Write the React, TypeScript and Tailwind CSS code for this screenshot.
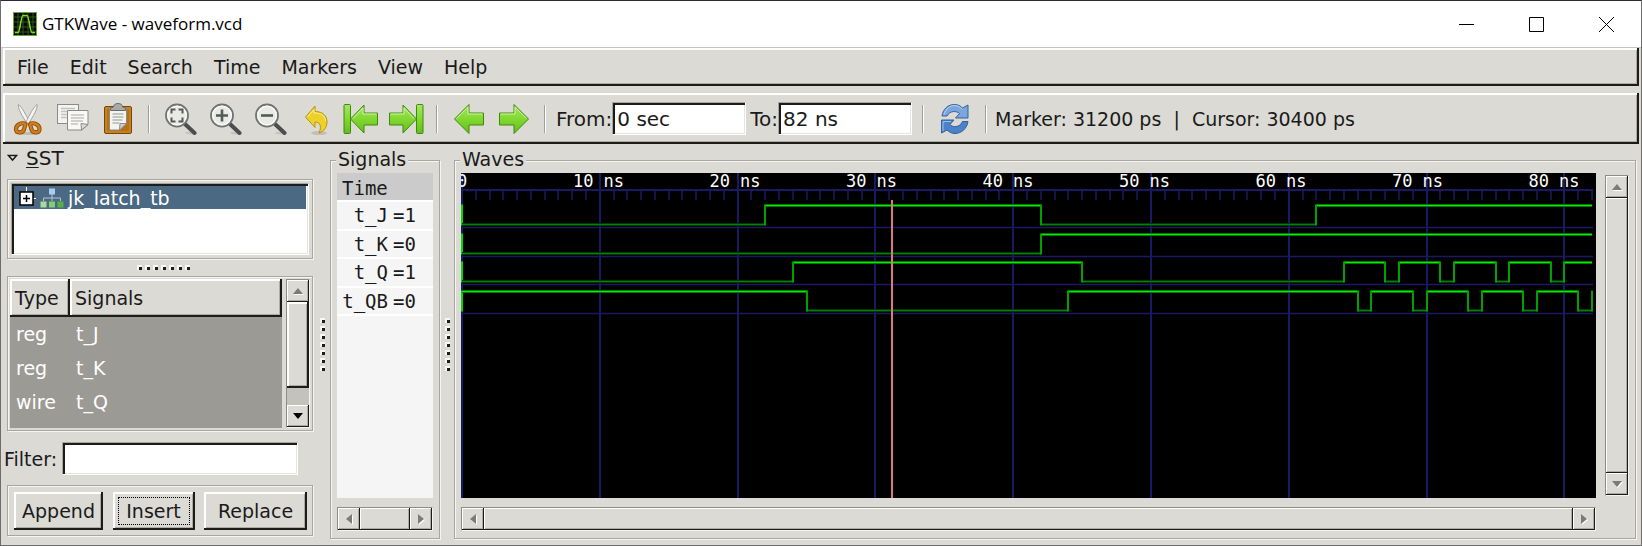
import type { ReactNode } from "react";

const PX_PER_NS = 13.78;
const LABEL_PX_PER_NS = 13.65;
const ORIGIN = 1;
const END_NS = 82;

const at = (ns: number) => Math.round(ns * PX_PER_NS) + ORIGIN;

type Signal = { name: string; value: string; initial: 0 | 1; edges: number[] };

const signals: Signal[] = [
  { name: "t_J", value: "1", initial: 0, edges: [22, 42, 62] },
  { name: "t_K", value: "0", initial: 0, edges: [42] },
  { name: "t_Q", value: "1", initial: 0, edges: [24, 45, 64, 67, 68, 71, 72, 75, 76, 79, 80] },
  { name: "t_QB", value: "0", initial: 1, edges: [25, 44, 65, 66, 69, 70, 73, 74, 77, 78, 81, 82] },
];

const raised =
  "bg-[#dcdad5] shadow-[inset_-2px_-2px_0_#1c1c18,inset_2px_2px_0_#ffffff,inset_-3px_-3px_0_#aeaca2]";
const raisedThin =
  "bg-[#dcdad5] shadow-[inset_-1px_-1px_0_#1c1c18,inset_1px_1px_0_#ffffff,inset_-2px_-2px_0_#aeaca2]";
const etched =
  "border border-[#a9a79d] shadow-[inset_1px_1px_0_#f6f5f2,1px_1px_0_#f6f5f2]";
const sunken =
  "border border-t-[#a9a79d] border-l-[#a9a79d] border-r-white border-b-white bg-white shadow-[inset_2px_2px_0_#1c1c18,inset_-1px_-1px_0_#e6e5e0]";

/* ---------- icons ---------- */

function Svg({ children, w = 32 }: { children: ReactNode; w?: number }) {
  return (
    <svg width={w} height="32" viewBox={`0 0 ${w} 32`} fill="none" aria-hidden="true">
      {children}
    </svg>
  );
}

function AppIcon() {
  return (
    <svg width="24" height="24" viewBox="0 0 24 24" fill="none" aria-hidden="true">
      <rect x="0.5" y="0.5" width="23" height="23" fill="#050805" stroke="#6ba53a" />
      <path d="M5 1v22M10 1v22M15 1v22M20 1v22M1 5h22M1 10h22M1 15h22M1 20h22" stroke="#35581f" />
      <path d="M2 20.500h3c2 0 3-17 5-17h4c2 0 3 17 5 17h3" stroke="#7be01c" strokeWidth="1.5" />
    </svg>
  );
}

function CutIcon() {
  return (
    <Svg>
      <ellipse cx="15.500" cy="30.500" rx="13" ry="1.300" fill="#b9b7b0" />
      <path d="M6.500 1.500c-1 4 4 12 8.500 19l2.500-1.500C14 12 10 4 6.500 1.500z" fill="#f4f4f3" stroke="#a2a19d" />
      <path d="M25 1.500c1 4-4 12-8.500 19L14 19C17.500 12 21.500 4 25 1.500z" fill="#f4f4f3" stroke="#a2a19d" />
      <path d="M12.500 20.500c-3.500-1-8.500 1.500-8.500 5.500 0 4.500 6.500 4.500 8 .5.500-2 1-4 1.500-5z" stroke="#8a4a00" strokeWidth="4.200" strokeLinejoin="round" />
      <path d="M12.500 20.500c-3.500-1-8.500 1.500-8.500 5.500 0 4.500 6.500 4.500 8 .5.500-2 1-4 1.500-5z" stroke="#cf7d18" strokeWidth="2.400" strokeLinejoin="round" />
      <path d="M19 20.500c3.500-1 8.500 1.500 8.500 5.500 0 4.500-6.500 4.500-8 .5-.5-2-1-4-1.500-5z" stroke="#8a4a00" strokeWidth="4.200" strokeLinejoin="round" />
      <path d="M19 20.500c3.500-1 8.500 1.500 8.500 5.500 0 4.500-6.500 4.500-8 .5-.5-2-1-4-1.500-5z" stroke="#cf7d18" strokeWidth="2.400" strokeLinejoin="round" />
    </Svg>
  );
}

function CopyIcon() {
  return (
    <Svg>
      <rect x="0.500" y="1.500" width="21" height="19" fill="#f3f3f2" stroke="#8b8a86" />
      <path d="M4 5.500h14M4 8.500h13M4 11.500h9M4 14.500h9" stroke="#c3c2bf" strokeWidth="1.500" />
      <path d="M10.500 7.500h20.500v14l-6 5.500H10.500z" fill="#f8f8f7" stroke="#8b8a86" />
      <path d="M14 12h13M14 15h13M14 18h12M14 21h7" stroke="#c3c2bf" strokeWidth="1.500" />
      <path d="M24.500 27l-.5-6.500 7 1z" fill="#dddcd9" stroke="#8b8a86" />
    </Svg>
  );
}

function PasteIcon() {
  return (
    <Svg>
      <rect x="2.500" y="3.500" width="27" height="27" rx="1.500" fill="#b8710f" stroke="#7b4700" />
      <rect x="4" y="5" width="24" height="24" stroke="#d0913d" />
      <path d="M7.500 5.500h17v15l-6.500 6.500H7.500z" fill="#f3f3f2" stroke="#8b8a86" />
      <path d="M10.500 11h11M10.500 14h11M10.500 17h10M10.500 20h7" stroke="#b7b6b2" strokeWidth="1.500" />
      <path d="M17.500 27l.5-6.500 6.500 0z" fill="#cfcecb" stroke="#8b8a86" />
      <path d="M8.500 7.500V5l3-1c0-2.500 2-3.500 4.500-3.500s4.500 1 4.500 3.500l3 1v2.500z" fill="#a9a9a5" stroke="#6b6b67" />
    </Svg>
  );
}

function Lens({ children }: { children: ReactNode }) {
  return (
    <Svg>
      <ellipse cx="26" cy="30" rx="6" ry="1.500" fill="#c6c4be" />
      <path d="M20.500 21.500l9 8.500" stroke="#4a4e4f" strokeWidth="4" strokeLinecap="round" />
      <circle cx="12" cy="12.500" r="11" fill="#e9eae6" stroke="#6f7371" strokeWidth="1.800" />
      <circle cx="12" cy="12.500" r="9.300" stroke="#f9f9f8" strokeWidth="1.300" />
      {children}
    </Svg>
  );
}

const ZoomFitIcon = () => (
  <Lens>
    <path d="M6.500 10.500v-4h4M13.500 6.500h4v4M17.500 14.500v4h-4M10.500 18.500h-4v-4" stroke="#555957" strokeWidth="2" />
  </Lens>
);
const ZoomInIcon = () => (
  <Lens>
    <path d="M6 12.500h12M12 6.500v12" stroke="#555957" strokeWidth="2.600" />
  </Lens>
);
const ZoomOutIcon = () => (
  <Lens>
    <path d="M6 12.500h12" stroke="#555957" strokeWidth="2.600" />
  </Lens>
);

function UndoIcon() {
  return (
    <Svg>
      <ellipse cx="19" cy="30" rx="8" ry="2" fill="#c0beb7" />
      <path
        d="M5.500 14L15 3v5.500c8 0 12 4.500 12 10.500 0 5-3 9.500-8 11 2.500-5 2-11-4-11v5.500z"
        fill="#edd02a"
        stroke="#b8950a"
        strokeLinejoin="round"
      />
      <path d="M7.500 14l6.500-7.500V10c7 0 11 2.500 11.500 8" stroke="#fbef92" />
    </Svg>
  );
}

function GreenGradient({ id }: { id: string }) {
  return (
    <defs>
      <linearGradient id={id} x1="0" y1="0" x2="0" y2="1">
        <stop offset="0" stopColor="#a5e65f" />
        <stop offset="0.500" stopColor="#82d832" />
        <stop offset="1" stopColor="#63bd1c" />
      </linearGradient>
    </defs>
  );
}

function FirstIcon() {
  return (
    <Svg w={36}>
      <GreenGradient id="gFirst" />
      <rect x="1" y="1.500" width="6.500" height="29" rx="1" fill="url(#gFirst)" stroke="#3f8a0c" />
      <path d="M7.500 16L21 2v8h13.500v12H21v8z" fill="url(#gFirst)" stroke="#3f8a0c" strokeLinejoin="round" />
      <path d="M10 15.500L20 5v6h13.500" stroke="#cdf2a4" />
    </Svg>
  );
}

function LastIcon() {
  return (
    <Svg w={36}>
      <GreenGradient id="gLast" />
      <path d="M28.500 16L15 2v8H1.500v12H15v8z" fill="url(#gLast)" stroke="#3f8a0c" strokeLinejoin="round" />
      <path d="M2.500 11H16V5l10 10.500" stroke="#cdf2a4" />
      <rect x="28.500" y="1.500" width="6.500" height="29" rx="1" fill="url(#gLast)" stroke="#3f8a0c" />
    </Svg>
  );
}

function PrevIcon() {
  return (
    <Svg>
      <GreenGradient id="gPrev" />
      <path d="M1.500 16L16 1.500V10h14.500v12H16v8.500z" fill="url(#gPrev)" stroke="#3f8a0c" strokeLinejoin="round" />
      <path d="M3.500 15.500L15 4v7h14.500" stroke="#cdf2a4" />
    </Svg>
  );
}

function NextIcon() {
  return (
    <Svg>
      <GreenGradient id="gNext" />
      <path d="M30.500 16L16 1.500V10H1.500v12H16v8.500z" fill="url(#gNext)" stroke="#3f8a0c" strokeLinejoin="round" />
      <path d="M2.500 11H17V4l11.500 11.500" stroke="#cdf2a4" />
    </Svg>
  );
}

function ReloadIcon() {
  return (
    <Svg>
      <path
        d="M3 13C4 6 9 1.500 15.500 1.500c3.500 0 6 1.500 8 3.500l5.500-3v13H16.500l4-4.500C18 8 11 7 8 13z"
        fill="#7ba6dc"
        stroke="#34609c"
        strokeLinejoin="round"
      />
      <path
        d="M29 18.500c-1 7-6.500 12-13 12-3.500 0-6-1.500-8-3.500l-5.500 3v-13H15l-4 4.500c2.500 3 9.500 3.500 12.500-3z"
        fill="#4a83c8"
        stroke="#34609c"
        strokeLinejoin="round"
      />
      <path d="M5 11.500c2-6 6-9 10.500-9 3.500 0 6 2 8 4" stroke="#b9d2f0" />
      <path d="M4 28v-9.500h8" stroke="#9dc0ea" />
    </Svg>
  );
}

function ModuleIcon() {
  return (
    <svg width="24" height="20" viewBox="0 0 24 20" fill="none" aria-hidden="true">
      <path d="M3.500 13v-3h17v3M12 6v7" stroke="#b9c4cd" />
      <rect x="9" y="0.500" width="6" height="6" fill="#a8cdf5" />
      <rect x="0.500" y="13.500" width="6" height="6" fill="#a5dc9a" />
      <rect x="9" y="13.500" width="6" height="6" fill="#84cc74" />
      <rect x="17.500" y="13.500" width="6" height="6" fill="#56b146" />
    </svg>
  );
}

/* ---------- small parts ---------- */

function ToolButton({ label, children }: { label: string; children: ReactNode }) {
  return (
    <button type="button" aria-label={label} className="flex w-[45px] shrink-0 items-center justify-center">
      {children}
    </button>
  );
}

function Separator() {
  return (
    <div className="flex w-[18px] shrink-0 justify-center">
      <div className="h-7 w-0.5 border-r border-l border-r-white border-l-[#a09e95]" />
    </div>
  );
}

function Grip({ vertical = false }: { vertical?: boolean }) {
  return (
    <div className={vertical ? "flex flex-col items-center gap-[3px]" : "flex items-center gap-[3px]"}>
      {Array.from({ length: 7 }, (_, i) => (
        <span
          key={i}
          className="h-[5px] w-[5px] border-t-2 border-l-2 border-[#f8f8f6] bg-[#1c1c18]"
        />
      ))}
    </div>
  );
}

type Direction = "up" | "down" | "left" | "right";
const arrowPaths: Record<Direction, string> = {
  up: "M1 9L6 3L11 9z",
  down: "M1 3L6 9L11 3z",
  left: "M9 1L3 6L9 11z",
  right: "M3 1L9 6L3 11z",
};

function ArrowButton({ dir, active = false }: { dir: Direction; active?: boolean }) {
  return (
    <button
      type="button"
      aria-label={`Scroll ${dir}`}
      className={`flex h-[22px] w-[22px] shrink-0 items-center justify-center ${raisedThin}`}
    >
      <svg width="12" height="12" viewBox="0 0 12 12" aria-hidden="true">
        {!active && <path d={arrowPaths[dir]} fill="#ffffff" transform="translate(1 1)" />}
        <path d={arrowPaths[dir]} fill={active ? "#000000" : "#7d7b76"} />
      </svg>
    </button>
  );
}

const trough =
  "border border-t-[#8e8c84] border-l-[#8e8c84] border-r-[#f6f5f2] border-b-[#f6f5f2] bg-[#c4c2bc]";

function HScroll() {
  return (
    <div className={`flex h-[24px] ${trough}`}>
      <ArrowButton dir="left" />
      <div className={`flex-1 ${raisedThin}`} />
      <ArrowButton dir="right" />
    </div>
  );
}

function Frame({ title, className, children }: { title: string; className: string; children: ReactNode }) {
  return (
    <section aria-label={title} className={`relative flex flex-col ${etched} ${className}`}>
      <h2 className="absolute -top-4 left-[5px] bg-[#dcdad5] px-0.5 leading-7">{title}</h2>
      {children}
    </section>
  );
}

/* ---------- wave plot ---------- */

function Trace({ signal, row }: { signal: Signal; row: number }) {
  const high = 32.5 + Math.round(row * 28.5);
  const low = high + 19;
  const times = [0, ...signal.edges, END_NS];
  return (
    <g fill="none">
      <path d={`M${ORIGIN} ${high - 1}V${low + 1}`} stroke="#00d800" strokeWidth="2" />
      {times.slice(0, -1).map((t, i) => {
        const isHigh = (signal.initial + i) % 2 === 1;
        const y = isHigh ? high : low;
        const x1 = at(t);
        const x2 = at(times[i + 1]);
        return (
          <g key={i}>
            <path d={`M${x1} ${y}H${x2}`} stroke={isHigh ? "#007a00" : "#003a00"} strokeWidth="3" />
            <path d={`M${x1} ${y}H${x2}`} stroke={isHigh ? "#00f000" : "#008400"} strokeWidth="1" />
          </g>
        );
      })}
      {signal.edges.map((t) => (
        <path key={t} d={`M${at(t)} ${high - 1}V${low + 1}`} stroke="#00a000" strokeWidth="2" />
      ))}
    </g>
  );
}

function WavePlot() {
  const nanoseconds = Array.from({ length: END_NS + 1 }, (_, i) => i);
  const plotEnd = at(END_NS) + 1;
  return (
    <svg width="100%" height="100%" className="block overflow-visible" role="img" aria-label="Signal waveforms">
      <g stroke="#1a1a62">
        {nanoseconds.map((ns) =>
          ns % 10 === 0 ? (
            <line key={ns} x1={at(ns)} x2={at(ns)} y1="0" y2="100%" strokeWidth="2" />
          ) : (
            <line key={ns} x1={at(ns)} x2={at(ns)} y1="17" y2="27" strokeWidth="1.500" />
          ),
        )}
        <line x1={ORIGIN} x2={plotEnd} y1="17" y2="17" strokeWidth="2" />
        {signals.map((s, i) => (
          <line key={s.name} x1={ORIGIN} x2={plotEnd} y1={54.5 + Math.round(i * 28.5)} y2={54.5 + Math.round(i * 28.5)} strokeWidth="1.500" />
        ))}
      </g>
      <g fill="#ffffff" fontSize="17" textAnchor="middle" className="font-['DejaVu_Sans_Mono',monospace]">
        {nanoseconds
          .filter((ns) => ns % 10 === 0)
          .map((ns) => (
            <text key={ns} x={ORIGIN + ns * LABEL_PX_PER_NS} y="14">
              {ns === 0 ? "0" : `${ns} ns`}
            </text>
          ))}
      </g>
      {signals.map((s, i) => (
        <Trace key={s.name} signal={s} row={i} />
      ))}
      <line x1={at(31.2)} x2={at(31.2)} y1="27" y2="100%" stroke="#e07878" strokeWidth="2" />
    </svg>
  );
}

/* ---------- page ---------- */

const menus = ["File", "Edit", "Search", "Time", "Markers", "View", "Help"];
const variables = [
  ["reg", "t_J"],
  ["reg", "t_K"],
  ["wire", "t_Q"],
];

export default function App() {
  return (
    <div className="flex min-h-screen flex-col border border-[#6b6b70] border-t-[#2b2b3a] bg-[#dcdad5] font-['DejaVu_Sans',sans-serif] text-[19px] leading-6 text-[#1a1a1a]">
      <header className="flex h-[47px] items-stretch gap-px border-b border-[#c4c4c4] bg-white pl-3">
        <div className="flex flex-1 items-center gap-[5px]">
          <AppIcon />
          <h1 className="font-['Open_Sans',sans-serif] text-[17px] text-black">GTKWave - waveform.vcd</h1>
        </div>
        {[
          ["Minimize", "M0 7.500h15"],
          ["Maximize", "M.5.5h14v14H.5z"],
          ["Close", "M0 0l15 15M15 0L0 15"],
        ].map(([label, d]) => (
          <button key={label} type="button" aria-label={label} className="flex w-[69px] items-center justify-center">
            <svg width="15" height="15" viewBox="0 0 15 15" fill="none" stroke="#000000" aria-hidden="true">
              <path d={d} />
            </svg>
          </button>
        ))}
      </header>

      <nav className={`mx-0.5 flex h-[38px] items-center gap-px pl-1 ${raised}`}>
        {menus.map((m) => (
          <button key={m} type="button" className="px-[10px]">
            {m}
          </button>
        ))}
      </nav>

      <div className={`mx-0.5 mt-[7px] flex h-[51px] items-center pl-0.5 whitespace-nowrap ${raised}`}>
        <ToolButton label="Cut"><CutIcon /></ToolButton>
        <ToolButton label="Copy"><CopyIcon /></ToolButton>
        <ToolButton label="Paste"><PasteIcon /></ToolButton>
        <Separator />
        <ToolButton label="Zoom fit"><ZoomFitIcon /></ToolButton>
        <ToolButton label="Zoom in"><ZoomInIcon /></ToolButton>
        <ToolButton label="Zoom out"><ZoomOutIcon /></ToolButton>
        <ToolButton label="Zoom undo"><UndoIcon /></ToolButton>
        <ToolButton label="Go to start"><FirstIcon /></ToolButton>
        <ToolButton label="Go to end"><LastIcon /></ToolButton>
        <Separator />
        <ToolButton label="Previous edge"><PrevIcon /></ToolButton>
        <ToolButton label="Next edge"><NextIcon /></ToolButton>
        <Separator />
        <div className="flex items-center pr-0.5 pl-0.5 text-[20px]">
          <label htmlFor="from">From:</label>
          <input id="from" defaultValue="0 sec" className={`h-[33px] w-[134px] px-1 outline-none ${sunken}`} />
          <label htmlFor="to" className="pl-1">To:</label>
          <input id="to" defaultValue="82 ns" className={`h-[33px] w-[134px] px-1 outline-none ${sunken}`} />
        </div>
        <Separator />
        <ToolButton label="Reload"><ReloadIcon /></ToolButton>
        <Separator />
        <p>Marker: 31200 ps&nbsp; |&nbsp; Cursor: 30400 ps</p>
      </div>

      <main className="flex flex-1 pr-[5px]">
        <aside className="flex w-[312px] shrink-0 flex-col pb-[9px]">
          <button type="button" className="flex h-[35px] items-start gap-2 pt-0.5 pl-[6px] text-[20px]">
            <svg width="11" height="24" viewBox="0 0 11 24" fill="none" aria-hidden="true">
              <path d="M1.500 9.500h8L5.500 14z" fill="#f2f1ee" stroke="#1c1c18" strokeWidth="1.500" />
            </svg>
            <span>
              <span className="underline decoration-1 underline-offset-2">S</span>ST
            </span>
          </button>

          <div className={`ml-[6px] h-[80px] p-[3px] ${etched}`}>
            <div className={`h-full p-0.5 ${sunken}`}>
              <div className="flex h-[23px] items-center bg-[#4b6983] pl-[5px] text-white">
                <svg width="18" height="22" viewBox="0 0 18 22" fill="none" aria-hidden="true">
                  <path d="M7.500 0v5M14 11.500h3" stroke="#ffffff" />
                  <rect x="1" y="5" width="13" height="13" fill="#ffffff" stroke="#000000" strokeWidth="1.500" />
                  <path d="M4 11.500h7M7.500 8v7" stroke="#000000" strokeWidth="1.500" />
                </svg>
                <span className="pr-1 pl-[3px]"><ModuleIcon /></span>
                jk_latch_tb
              </div>
            </div>
          </div>

          <div className="flex h-[17px] items-center justify-center pl-3">
            <Grip />
          </div>

          <div className={`ml-[6px] flex h-[155px] flex-auto overflow-hidden p-0.5 ${etched}`}>
            <div className="flex-1 overflow-hidden bg-[#9c9a94]">
              <table className="w-full table-fixed border-collapse text-left">
                <thead>
                  <tr className="h-[38px]">
                    <th className={`w-[60px] pl-[5px] font-normal ${raised}`}>Type</th>
                    <th className={`pl-[5px] font-normal ${raised}`}>Signals</th>
                  </tr>
                </thead>
                <tbody className="text-white">
                  {variables.map(([type, name]) => (
                    <tr key={name} className="h-[34px]">
                      <td className="pl-[6px]">{type}</td>
                      <td className="pl-[6px]">{name}</td>
                    </tr>
                  ))}
                </tbody>
              </table>
            </div>
            <div className={`ml-1 flex w-[24px] flex-col ${trough}`}>
              <ArrowButton dir="up" />
              <div className={`h-[86px] w-[22px] ${raised}`} />
              <div className="flex-1" />
              <ArrowButton dir="down" active />
            </div>
          </div>

          <div className="mt-[11px] flex items-center pl-[3px]">
            <label htmlFor="filter" className="w-[58px]">Filter:</label>
            <input id="filter" className={`h-[33px] w-[236px] px-1 outline-none ${sunken}`} />
          </div>

          <div className={`mt-[10px] ml-[6px] flex h-[51px] items-center justify-between pr-[5px] pl-[6px] ${etched}`}>
            <button type="button" className={`h-[38px] w-[89px] ${raised}`}>Append</button>
            <button type="button" className={`h-[38px] w-[82px] p-[5px] ${raised}`}>
              <span className="block border border-dotted border-black leading-[26px]">Insert</span>
            </button>
            <button type="button" className={`h-[38px] w-[103px] ${raised}`}>Replace</button>
          </div>
        </aside>

        <div className="flex w-[17px] shrink-0 flex-col justify-center pl-[2px]">
          <Grip vertical />
        </div>

        <Frame title="Signals" className="mt-4 mb-[6px] w-[110px] shrink-0 px-[6px] pt-3 pb-[7px]">
          <div className="flex flex-1 flex-col bg-[#f5f5f5] font-['DejaVu_Sans_Mono',monospace] text-[19px]">
            <div className="flex h-[27px] items-end bg-[#cbcbcb] pl-[5px]">Time</div>
            <ul className="grid h-[114px] grid-rows-4">
              {signals.map((s) => (
                <li key={s.name} className="flex items-center border-t-2 border-white">
                  <span className="w-[51px] text-right">{s.name}</span>
                  <span className="pl-[5px]">={s.value}</span>
                </li>
              ))}
            </ul>
            <div className="flex-1 border-t-2 border-white" />
          </div>
          <div className="h-[9px]" />
          <HScroll />
        </Frame>

        <div className="flex w-[14px] shrink-0 flex-col justify-center">
          <Grip vertical />
        </div>

        <Frame title="Waves" className="mt-4 mb-[6px] min-w-0 flex-1 pt-3 pr-[6px] pb-[7px] pl-[6px]">
          <div className="grid flex-1 grid-cols-[minmax(0,1fr)_24px] grid-rows-[minmax(0,1fr)_24px] gap-[9px]">
            <div className="overflow-x-clip overflow-y-visible bg-black">
              <WavePlot />
            </div>
            <div className={`mt-0.5 mb-0.5 flex flex-col ${trough}`}>
              <ArrowButton dir="up" />
              <div className={`flex-1 ${raisedThin}`} />
              <ArrowButton dir="down" />
            </div>
            <HScroll />
          </div>
        </Frame>
      </main>
    </div>
  );
}
